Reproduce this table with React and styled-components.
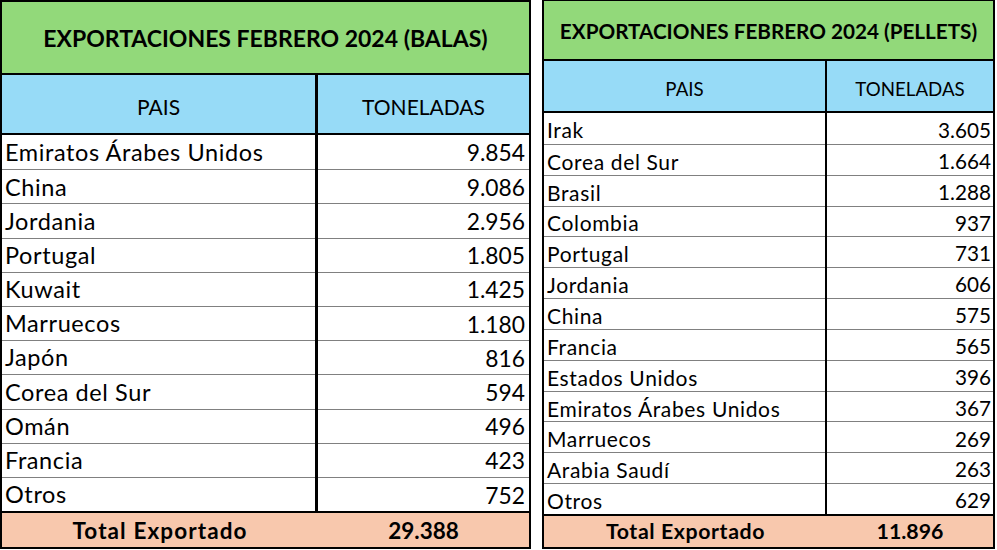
import React from "react";
import styled, { createGlobalStyle } from "styled-components";

const GlobalStyle = createGlobalStyle`
  html, body { margin: 0; padding: 0; background: #ffffff; }
  body { font-family: Lato, "Open Sans", sans-serif; color: #000; }
  * { box-sizing: border-box; }
`;

const Page = styled.div`
  display: flex;
  align-items: flex-start;
  gap: ${(p) => p.$gap}px;
  width: 997px;
  height: 550px;
`;

const Sheet = styled.div`
  width: ${(p) => p.$width}px;
  border: 2px solid #000;
  border-top-width: ${(p) => p.$top}px;
  display: flex;
  flex-direction: column;
  background: #fff;
`;

const Title = styled.div`
  height: ${(p) => p.$h}px;
  background: #92d97a;
  border-bottom: 2px solid #000;
  display: flex;
  align-items: center;
  justify-content: center;
  font-weight: 700;
  font-size: ${(p) => p.$fs}px;
  padding-top: ${(p) => p.$pt || 0}px;
  white-space: nowrap;
  line-height: 1;
`;

const Row = styled.div`
  display: grid;
  grid-template-columns: ${(p) => p.$cols};
  column-gap: ${(p) => p.$div}px;
  background: #000;
  height: ${(p) => (p.$h ? `${p.$h}px` : "auto")};
  flex: ${(p) => (p.$grow ? 1 : "none")};
`;

const HeadRow = styled(Row)`
  border-bottom: 2px solid #000;
`;

const HeadCell = styled.div`
  background: #97dbf7;
  display: flex;
  align-items: center;
  justify-content: center;
  font-size: ${(p) => p.$fs}px;
  padding-top: ${(p) => p.$pt || 0}px;
  line-height: 1;
`;

const Body = styled.div`
  height: ${(p) => p.$h}px;
  display: flex;
  flex-direction: column;
`;

const Cell = styled.div`
  background: #fff;
  display: flex;
  align-items: center;
  justify-content: ${(p) => (p.$right ? "flex-end" : "flex-start")};
  padding: ${(p) => p.$pt || 0}px ${(p) => p.$pr}px 0 ${(p) => p.$pl}px;
  border-top: ${(p) => (p.$first ? "none" : "1px solid #808080")};
  font-size: ${(p) => p.$fs}px;
  letter-spacing: ${(p) => p.$ls || 0}px;
  white-space: nowrap;
  line-height: 1;
`;

const TotalRow = styled.div`
  display: grid;
  grid-template-columns: ${(p) => p.$cols};
  height: ${(p) => p.$h}px;
  background: #f8c8ad;
  border-top: 2px solid #000;
  font-weight: 700;
  font-size: ${(p) => p.$fs}px;
  line-height: 1;
`;

const TotalCell = styled.div`
  display: flex;
  align-items: center;
  justify-content: center;
  padding-top: ${(p) => p.$pt || 0}px;
  letter-spacing: ${(p) => p.$ls || 0}px;
  white-space: nowrap;
`;

const balas = [
  ["Emiratos Árabes Unidos", "9.854"],
  ["China", "9.086"],
  ["Jordania", "2.956"],
  ["Portugal", "1.805"],
  ["Kuwait", "1.425"],
  ["Marruecos", "1.180"],
  ["Japón", "816"],
  ["Corea del Sur", "594"],
  ["Omán", "496"],
  ["Francia", "423"],
  ["Otros", "752"],
];

const pellets = [
  ["Irak", "3.605"],
  ["Corea del Sur", "1.664"],
  ["Brasil", "1.288"],
  ["Colombia", "937"],
  ["Portugal", "731"],
  ["Jordania", "606"],
  ["China", "575"],
  ["Francia", "565"],
  ["Estados Unidos", "396"],
  ["Emiratos Árabes Unidos", "367"],
  ["Marruecos", "269"],
  ["Arabia Saudí", "263"],
  ["Otros", "629"],
];

function ExportTable({ cfg, title, rows, total }) {
  const cols = `${cfg.c1}px ${cfg.c2}px`;
  return (
    <Sheet $width={cfg.width} $top={cfg.top}>
      <Title $h={cfg.titleH} $fs={cfg.titleFs} $pt={cfg.titlePt}>
        {title}
      </Title>
      <HeadRow $cols={cols} $div={cfg.div} $h={cfg.headH}>
        <HeadCell $fs={cfg.headFs} $pt={cfg.headPt}>PAIS</HeadCell>
        <HeadCell $fs={cfg.headFs} $pt={cfg.headPt}>TONELADAS</HeadCell>
      </HeadRow>
      <Body $h={cfg.bodyH}>
        {rows.map(([name, value], i) => (
          <Row key={name + i} $cols={cols} $div={cfg.div} $grow>
            <Cell
              $first={i === 0}
              $fs={cfg.fs}
              $ls={cfg.ls}
              $pl={cfg.pl}
              $pr={0}
              $pt={cfg.pt}
            >
              {name}
            </Cell>
            <Cell
              $first={i === 0}
              $fs={cfg.numFs}
              $pl={0}
              $pr={cfg.pr}
              $pt={cfg.pt}
              $right
            >
              {value}
            </Cell>
          </Row>
        ))}
      </Body>
      <TotalRow
        $cols={`${cfg.c1 + cfg.div}px ${cfg.c2}px`}
        $h={cfg.totalH}
        $fs={cfg.totalFs}
      >
        <TotalCell $pt={cfg.totalPt} $ls={cfg.totalLs}>
          Total Exportado
        </TotalCell>
        <TotalCell $pt={cfg.totalPt}>{total}</TotalCell>
      </TotalRow>
    </Sheet>
  );
}

const leftCfg = {
  width: 531,
  top: 2,
  c1: 313,
  c2: 211,
  div: 3,
  titleH: 73,
  titleFs: 23,
  titlePt: 1,
  headH: 60,
  headFs: 21,
  headPt: 4,
  bodyH: 376,
  fs: 23.5,
  ls: 0.6,
  numFs: 22.8,
  pl: 3,
  pr: 4,
  pt: 1,
  totalH: 36,
  totalFs: 22.5,
  totalLs: 1.1,
  totalPt: 2,
};

const rightCfg = {
  width: 453,
  top: 1,
  c1: 281,
  c2: 166,
  div: 2,
  titleH: 60,
  titleFs: 20.7,
  titlePt: 3,
  headH: 52,
  headFs: 18.7,
  headPt: 7,
  bodyH: 401,
  fs: 21,
  ls: 0.65,
  numFs: 20.7,
  pl: 3,
  pr: 2,
  pt: 3,
  totalH: 33,
  totalFs: 21.3,
  totalLs: 0.6,
  totalPt: 1,
};

export default function App() {
  return (
    <>
      <GlobalStyle />
      <Page $gap={11}>
        <ExportTable
          cfg={leftCfg}
          title="EXPORTACIONES FEBRERO 2024 (BALAS)"
          rows={balas}
          total="29.388"
        />
        <ExportTable
          cfg={rightCfg}
          title="EXPORTACIONES FEBRERO 2024 (PELLETS)"
          rows={pellets}
          total="11.896"
        />
      </Page>
    </>
  );
}
